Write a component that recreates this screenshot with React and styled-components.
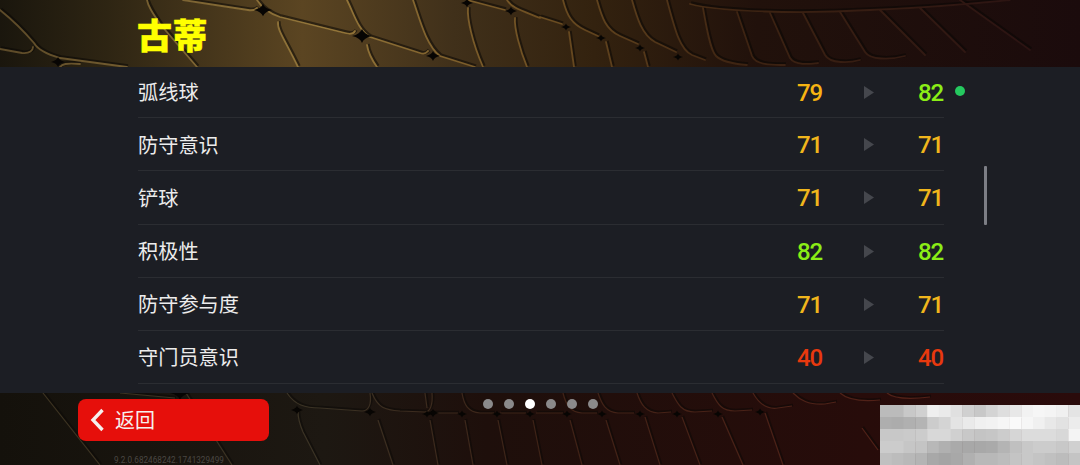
import React from "react";
import styled, { createGlobalStyle } from "styled-components";

const Global = createGlobalStyle`
  html, body { margin: 0; padding: 0; background: #000; }
  body { font-family: "Noto Sans CJK SC", "Noto Sans", sans-serif; }
`;

const Page = styled.div`
  position: relative;
  width: 1080px;
  height: 465px;
  overflow: hidden;
  display: flex;
  flex-direction: column;
`;

const Backdrop = styled.svg`
  position: absolute;
  inset: 0;
  width: 1080px;
  height: 465px;
`;

const Header = styled.header`
  position: relative;
  height: 67px;
  padding-left: 137px;
  display: flex;
  align-items: center;
`;

const Title = styled.h1`
  margin: 0 0 1px;
  font-size: 35px;
  line-height: 1;
  font-weight: 900;
  letter-spacing: 0.5px;
  color: #ffff00;
  -webkit-text-stroke: 0.4px #ffff00;
`;

const Panel = styled.main`
  position: relative;
  height: 326px;
  background: #1c1e24;
  padding-left: 138px;
`;

const List = styled.div`
  width: 806px;
`;

const Row = styled.div`
  position: relative;
  height: 53.2px;
  box-sizing: border-box;
  border-bottom: 1px solid #2b2d32;
  display: grid;
  grid-template-columns: 1fr 60px 61px 60px;
  align-items: center;
  padding-top: 1px;

  &:first-child {
    height: 51.2px;
    padding-top: 0;
  }
`;

const Label = styled.span`
  font-size: 20.2px;
  line-height: 1;
  color: #ececec;
`;

const Value = styled.span`
  font-family: Roboto, "Noto Sans", sans-serif;
  font-weight: 500;
  font-size: 24px;
  line-height: 1;
  letter-spacing: -1.2px;
  text-align: right;
  padding: 1px 1px 0 0;
  color: ${(p) => p.$color};
`;

const Arrow = styled.svg`
  width: 10px;
  height: 13px;
  margin-left: 41px;
  display: block;
`;

const ChangedDot = styled.span`
  position: absolute;
  right: -21px;
  top: 19px;
  width: 10px;
  height: 10px;
  border-radius: 50%;
  background: #25c95f;
`;

const ScrollThumb = styled.div`
  position: absolute;
  left: 983.5px;
  top: 99px;
  width: 3px;
  height: 59px;
  background: #7c7e85;
  border-radius: 1px;
`;

const Footer = styled.footer`
  position: relative;
  flex: 1;
  display: grid;
  grid-template-columns: 1fr auto 1fr;
  align-items: start;
`;

const FooterLeft = styled.div`
  padding: 6px 0 0 78px;
`;

const BackButton = styled.button`
  width: 191px;
  height: 42px;
  border: 0;
  border-radius: 8px;
  background: #e60f0b;
  color: #f6f0ee;
  display: flex;
  align-items: center;
  gap: 10px;
  padding: 0 0 0 12px;
  font-family: inherit;
  font-size: 20px;
  line-height: 1;
`;

const Version = styled.div`
  margin: 14px 0 0 36px;
  font-family: Roboto, sans-serif;
  font-size: 8.2px;
  line-height: 10px;
  color: #4a4743;
  white-space: nowrap;
`;

const Pager = styled.div`
  display: flex;
  gap: 11px;
  padding-top: 6px;
`;

const PagerDot = styled.span`
  width: 10px;
  height: 10px;
  border-radius: 50%;
  background: ${(p) => (p.$active ? "#ffffff" : "#8b8a8b")};
`;

const FooterRight = styled.div`
  display: flex;
  justify-content: flex-end;
  padding-top: 12px;
`;

const Mosaic = styled.svg`
  display: block;
  width: 200px;
  height: 60px;
`;

const topLines = [
  "M0 10C15 22 28 36 34 43C38 50 46 54 60 58L127 67",
  "M0 49L22 53C30 54 33 50 33 47",
  "M60 67C62 64 66 63 80 64",
  "M147 0C148 6 152 12 160 24L197 67",
  "M183 0L248 10C254 11 256 9 257 8",
  "M257 0C262 8 268 13 280 17L345 33C352 35 354 33 355 31",
  "M347 0C354 14 358 30 370 37L420 53C426 55 427 52 428 51",
  "M413 0C420 20 426 45 440 56L475 67",
  "M278 22C277 30 285 40 298 67",
  "M367 45C368 52 372 60 377 67",
  "M468 8C467 18 472 42 483 67",
  "M467 0L505 10",
  "M507 0C512 8 520 10 540 18",
  "M515 18C514 28 520 50 527 67",
  "M540 17L562 24",
  "M563 0C567 16 572 24 585 30L598 36",
  "M597 0C602 18 606 30 620 36L638 44",
  "M632 0C637 18 642 35 655 42L676 52",
  "M667 0C675 30 680 50 692 55L705 60",
  "M569 32L574 67",
  "M606 42L612 67",
  "M644 52L648 67",
  "M703 8C706 25 710 50 716 56C722 62 735 64 747 65",
  "M737 12L752 56C756 66 775 65 785 65",
  "M770 13L790 58C795 66 810 64 818 63",
  "M803 13L825 55C830 64 850 63 860 60",
  "M840 12L865 52C870 60 890 60 905 56",
  "M880 10L925 55",
  "M920 8L965 52",
  "M690 4C720 12 800 14 870 10C920 8 980 3 1010 0",
  "M960 0L1030 50",
];

const bottomLines = [
  "M43 393L100 465",
  "M120 393L175 398",
  "M186 393L232 465",
  "M287 393C295 405 305 408 320 408L362 411C368 411 372 405 370 393",
  "M372 393C378 408 385 410 400 411L425 412C430 412 433 405 432 393",
  "M298 412C298 420 300 425 303 432L320 465",
  "M378 420L393 465",
  "M430 420L438 465",
  "M465 420L473 465",
  "M498 420L507 465",
  "M533 420L542 465",
  "M570 420L582 465",
  "M606 420L620 465",
  "M645 417L660 465",
  "M682 417L700 465",
  "M722 417L743 465",
  "M765 413L783 465",
  "M862 428L878 450",
  "M425 393L427 408M462 393C464 405 468 412 480 413L494 413",
  "M432 413L458 413M500 413L526 413M536 413L563 413",
  "M563 393C566 405 570 412 582 413L597 413",
  "M598 393C602 405 606 412 618 413L634 413",
  "M637 393C641 405 646 412 658 413L671 412",
  "M672 393C678 405 682 412 695 412L712 411",
  "M712 393C718 405 722 411 735 411L752 410",
  "M753 393C758 402 765 410 778 408L792 406",
  "M793 393C800 400 808 405 825 404L836 402",
  "M840 393C848 400 860 402 880 400",
  "M887 393C893 398 905 400 930 397",
];

const topNodes = [
  [263, 10, 9], [362, 36, 10], [433, 56, 7], [58, 62, 7], [467, 3, 6], [511, 11, 6],
  [566, 27, 5], [601, 38, 5], [640, 48, 5], [678, 57, 5],
];

const bottomNodes = [
  [180, 393, 10], [297, 410, 6], [370, 412, 6], [433, 413, 6], [427, 414, 5], [462, 414, 5],
  [497, 414, 5], [530, 414, 5], [567, 414, 5], [602, 414, 5], [640, 414, 5],
  [677, 414, 5], [718, 414, 5], [760, 412, 5],
];

const starPath = ([x, y, r]) => {
  const h = r * 0.7;
  const c = r * 0.18;
  return `M${x - r} ${y}Q${x - c} ${y - c} ${x} ${y - h}Q${x + c} ${y - c} ${x + r} ${y}Q${x + c} ${y + c} ${x} ${y + h}Q${x - c} ${y + c} ${x - r} ${y}Z`;
};

const Background = () => (
  <Backdrop viewBox="0 0 1080 465" aria-hidden="true">
    <defs>
      <linearGradient id="topFill" gradientUnits="userSpaceOnUse" x1="0" y1="0" x2="1080" y2="0">
        <stop offset="0" stopColor="#1a160d" />
        <stop offset="0.1" stopColor="#2e2513" />
        <stop offset="0.28" stopColor="#5b4522" />
        <stop offset="0.42" stopColor="#40301a" />
        <stop offset="0.55" stopColor="#33220f" />
        <stop offset="0.7" stopColor="#21110b" />
        <stop offset="1" stopColor="#1b0b0c" />
      </linearGradient>
      <linearGradient id="bottomFill" gradientUnits="userSpaceOnUse" x1="0" y1="0" x2="1080" y2="0">
        <stop offset="0" stopColor="#14110b" />
        <stop offset="0.3" stopColor="#1d1812" />
        <stop offset="0.45" stopColor="#1e0f0b" />
        <stop offset="0.8" stopColor="#270c0a" />
        <stop offset="1" stopColor="#2a0b0b" />
      </linearGradient>
      <linearGradient id="topEdge" gradientUnits="userSpaceOnUse" x1="0" y1="0" x2="1080" y2="0">
        <stop offset="0" stopColor="#5c4a28" />
        <stop offset="0.3" stopColor="#95773a" />
        <stop offset="0.5" stopColor="#6e4f22" />
        <stop offset="0.68" stopColor="#3e2412" />
        <stop offset="1" stopColor="#281012" />
      </linearGradient>
      <linearGradient id="bottomEdge" gradientUnits="userSpaceOnUse" x1="0" y1="0" x2="1080" y2="0">
        <stop offset="0" stopColor="#3d3320" />
        <stop offset="0.3" stopColor="#3a3224" />
        <stop offset="0.5" stopColor="#3e2216" />
        <stop offset="1" stopColor="#5c2018" />
      </linearGradient>
    </defs>
    <rect width="1080" height="67" fill="url(#topFill)" />
    <rect y="393" width="1080" height="72" fill="url(#bottomFill)" />
    <g fill="none" stroke="#0a0805" strokeOpacity="0.55" strokeWidth="3.4" transform="translate(1 -1)">
      {topLines.map((d) => <path key={d} d={d} />)}
    </g>
    <g fill="none" stroke="url(#topEdge)" strokeWidth="1.8" strokeLinecap="round">
      {topLines.map((d) => <path key={d} d={d} />)}
    </g>
    <g fill="none" stroke="#0a0805" strokeOpacity="0.5" strokeWidth="2.4" transform="translate(1 -1)">
      {bottomLines.map((d) => <path key={d} d={d} />)}
    </g>
    <g fill="none" stroke="url(#bottomEdge)" strokeWidth="1.2">
      {bottomLines.map((d) => <path key={d} d={d} />)}
    </g>
    <g fill="#070503">
      {[...topNodes, ...bottomNodes].map((n) => <path key={`${n[0]}-${n[1]}`} d={starPath(n)} />)}
    </g>
  </Backdrop>
);

const YELLOW = "#f0b61c";
const GREEN = "#8bed16";
const RED = "#e8390e";

const stats = [
  { name: "弧线球", from: 79, to: 82, fromColor: "#f6b412", toColor: GREEN, changed: true },
  { name: "防守意识", from: 71, to: 71, fromColor: YELLOW, toColor: YELLOW },
  { name: "铲球", from: 71, to: 71, fromColor: YELLOW, toColor: YELLOW },
  { name: "积极性", from: 82, to: 82, fromColor: GREEN, toColor: GREEN },
  { name: "防守参与度", from: 71, to: 71, fromColor: YELLOW, toColor: YELLOW },
  { name: "守门员意识", from: 40, to: 40, fromColor: RED, toColor: RED },
];

const mosaic = [
  ["bb", "bb", "c8", "d0", "ef", "ea", "e0", "d0", "c8", "d4", "de", "e8", "f2", "f6", "f4", "f0", "e4"],
  ["ae", "ac", "b0", "b4", "cc", "d4", "e4", "ea", "f0", "f2", "f6", "fa", "f6", "f0", "e8", "e2", "ec"],
  ["c8", "c8", "ca", "cc", "d8", "d8", "d0", "c8", "c4", "c6", "cc", "d6", "dc", "dc", "dc", "d8", "f4"],
  ["cc", "cc", "c6", "c4", "b8", "b0", "aa", "a8", "a8", "aa", "b4", "c0", "c8", "cc", "cc", "c8", "d0"],
  ["c0", "bc", "b8", "b4", "a8", "a4", "a8", "b0", "b8", "b8", "bc", "c4", "c8", "c4", "c0", "bc", "c4"],
];

export default function App() {
  return (
    <Page>
      <Global />
      <Background />
      <Header>
        <Title>古蒂</Title>
      </Header>
      <Panel>
        <List>
          {stats.map((s) => (
            <Row key={s.name}>
              <Label>{s.name}</Label>
              <Value $color={s.fromColor}>{s.from}</Value>
              <Arrow viewBox="0 0 10 13" aria-hidden="true">
                <path d="M0 0L10 6.5L0 13Z" fill="#45474d" />
              </Arrow>
              <Value $color={s.toColor}>{s.to}</Value>
              {s.changed && <ChangedDot />}
            </Row>
          ))}
        </List>
        <ScrollThumb />
      </Panel>
      <Footer>
        <FooterLeft>
          <BackButton type="button">
            <svg width="15" height="24" viewBox="0 0 15 24" aria-hidden="true">
              <path d="M12.5 2L3 12L12.5 22" fill="none" stroke="#f6f0ee" strokeWidth="3.4" />
            </svg>
            返回
          </BackButton>
          <Version>9.2.0.682468242.1741329499</Version>
        </FooterLeft>
        <Pager>
          {[0, 1, 2, 3, 4, 5].map((i) => <PagerDot key={i} $active={i === 2} />)}
        </Pager>
        <FooterRight>
          <Mosaic viewBox="0 0 204 60" preserveAspectRatio="none" aria-hidden="true">
            {mosaic.map((row, y) =>
              row.map((c, x) => (
                <rect key={`${x}-${y}`} x={x * 12} y={y * 12} width="12.5" height="12.5" fill={`#${c}${c}${c}`} />
              ))
            )}
          </Mosaic>
        </FooterRight>
      </Footer>
    </Page>
  );
}
